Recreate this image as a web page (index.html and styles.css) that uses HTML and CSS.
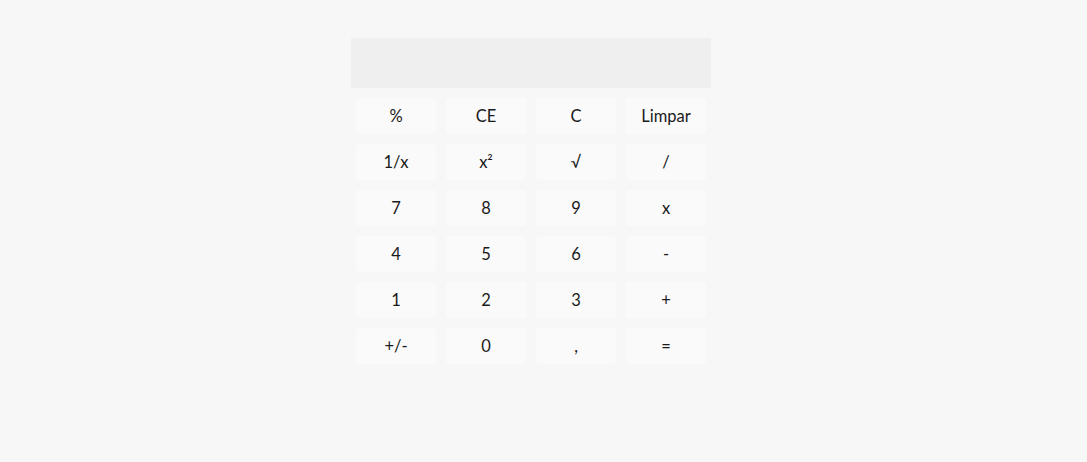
FILE: index.html
```html
<!DOCTYPE html>
<html lang="pt">
<head>
<meta charset="utf-8">
<title>Calculadora</title>
<link rel="stylesheet" href="styles.css">
</head>
<body>
<div class="calc">
  <div class="display"></div>
  <div class="keys">
    <button class="key">%</button>
    <button class="key">CE</button>
    <button class="key">C</button>
    <button class="key">Limpar</button>
    <button class="key">1/x</button>
    <button class="key">x²</button>
    <button class="key">√</button>
    <button class="key">/</button>
    <button class="key">7</button>
    <button class="key">8</button>
    <button class="key">9</button>
    <button class="key">x</button>
    <button class="key">4</button>
    <button class="key">5</button>
    <button class="key">6</button>
    <button class="key">-</button>
    <button class="key">1</button>
    <button class="key">2</button>
    <button class="key">3</button>
    <button class="key">+</button>
    <button class="key">+/-</button>
    <button class="key">0</button>
    <button class="key">,</button>
    <button class="key">=</button>
  </div>
</div>
</body>
</html>
```
FILE: styles.css
```css
html, body {
  margin: 0;
  padding: 0;
  background: #f7f7f7;
}
body {
  font-family: "Lato", "Liberation Sans", sans-serif;
}
.calc {
  width: 360px;
  margin: 38px 0 0 calc(50% - 192.5px);
}
.display {
  height: 50px;
  background: #efefef;
}
.keys {
  display: grid;
  grid-template-columns: repeat(4, 80px);
  grid-auto-rows: 36px;
  gap: 10px;
  padding: 10px 5px 0;
}
.key {
  border: none;
  border-radius: 3px;
  background: #fafafa;
  color: #1a1a1a;
  font-family: inherit;
  font-size: 16.5px;
  font-weight: 400;
  line-height: 1;
  padding: 0;
  margin: 0;
  cursor: pointer;
}
```
